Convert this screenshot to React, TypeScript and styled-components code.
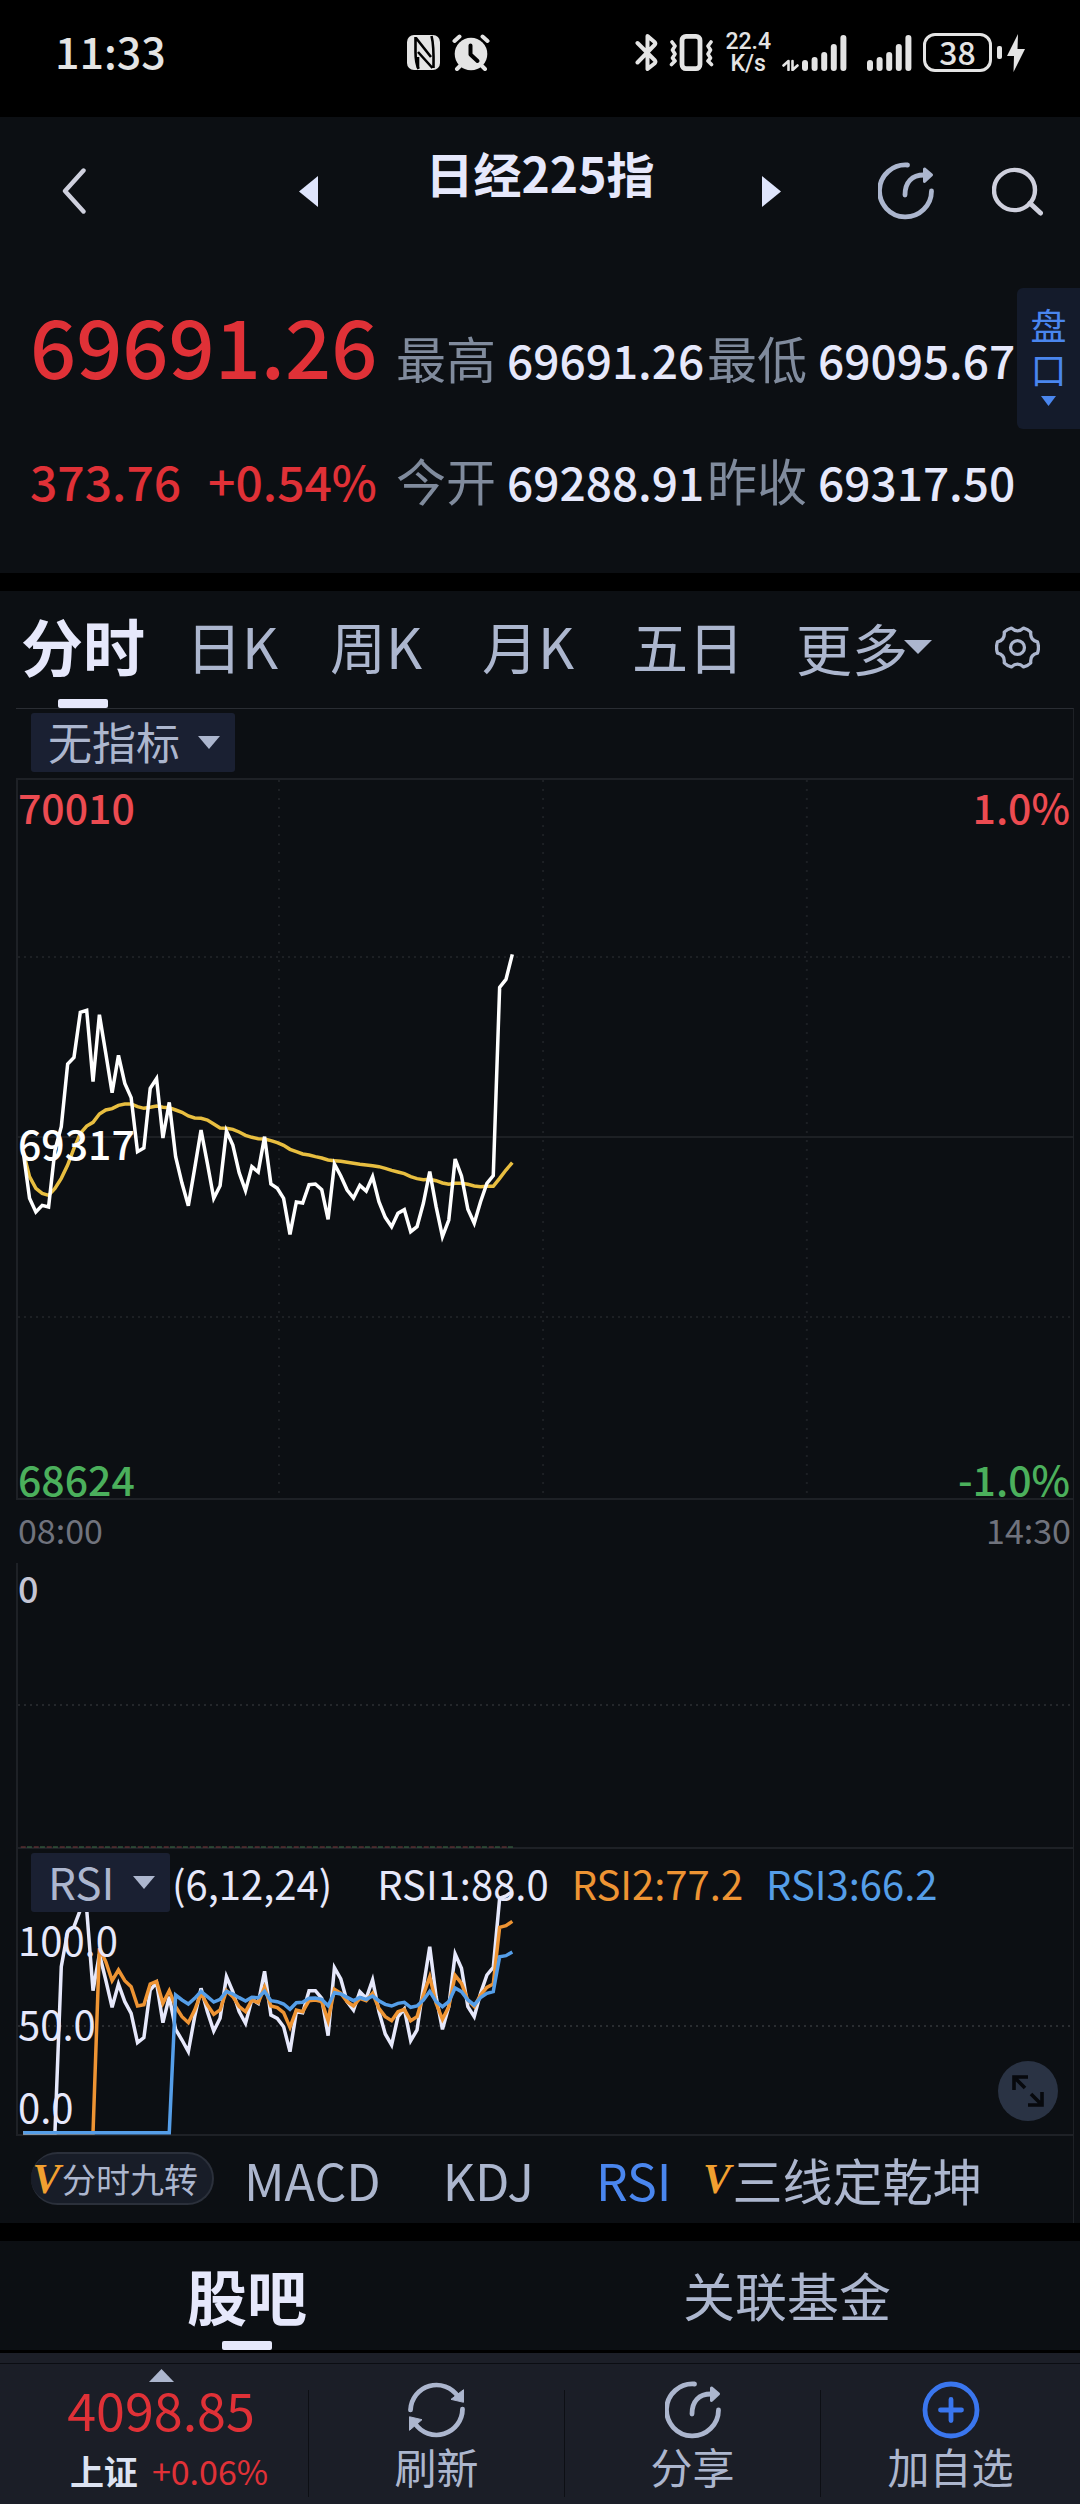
import React from "react";
import styled, { createGlobalStyle, css } from "styled-components";

const CJK = `"Noto Sans CJK SC", "Noto Sans", sans-serif`;

const c = {
  black: "#000000",
  panel: "#0c0f13",
  chip: "#1a2032",
  bar: "#1b1e27",
  line: "#1e2126",
  lineStrong: "#2a2d33",
  text: "#e6e8fb",
  muted: "#acb6ce",
  label: "#808b9d",
  axis: "#70737d",
  red: "#e03137",
  redAxis: "#ec4b51",
  green: "#4bb05c",
  blue: "#4a86ee",
  orange: "#ee9433",
  sky: "#559ee8",
  yellow: "#e8be40",
  status: "#e4e4e4",
};

const GlobalStyle = createGlobalStyle`
  * { box-sizing: border-box; }
  body { margin: 0; background: ${c.black}; font-family: ${CJK}; color: ${c.text}; }
  button, select { font: inherit; color: inherit; background: none; border: 0; padding: 0; margin: 0; cursor: pointer; }
  svg { display: block; flex: none; }
`;

/* ---------- status bar ---------- */

const StatusBar = styled.div`
  display: grid;
  grid-template-columns: 352fr 134fr 484fr;
  align-items: center;
  height: 117px;
  padding: 0 55px 12px;
  color: ${c.status};
`;
const Clock = styled.time`
  padding-bottom: 5px;
  font-size: 43px;
  line-height: 52px;
  font-weight: 500;
`;
const StatusGroup = styled.div<{ $end?: boolean }>`
  display: flex;
  align-items: center;
  gap: ${(p) => (p.$end ? 11 : 12)}px;
  justify-content: ${(p) => (p.$end ? "flex-end" : "flex-start")};
`;
const Speed = styled.div`
  font-family: Roboto, sans-serif;
  font-size: 23px;
  line-height: 22px;
  font-weight: 500;
  text-align: center;
`;
const SignalGroup = styled.div`
  display: flex;
  align-items: flex-end;
  gap: 20px;
`;
const Battery = styled.div`
  display: flex;
  align-items: center;
  gap: 5px;
`;
const BatteryBody = styled.div`
  width: 69px;
  height: 39px;
  border: 3px solid ${c.status};
  border-radius: 12px;
  font-size: 32px;
  line-height: 31px;
  font-weight: 500;
  text-align: center;
`;
const BatteryCap = styled.div`
  width: 5px;
  height: 13px;
  border-radius: 2px;
  background: ${c.status};
`;

const NfcIcon = () => (
  <svg width="33" height="35" viewBox="0 0 33 35" aria-hidden="true">
    <rect width="33" height="35" rx="7" fill={c.status} />
    <path d="M8.500 2V17Q8.500 27 11.500 34M9 3L24 22M25.500 33L11 17M24.500 1Q27 10 26.500 33" stroke="#000" strokeWidth="2.600" fill="none" />
    <path d="M11 22V33" stroke="#000" strokeWidth="2.600" />
  </svg>
);
const AlarmIcon = () => (
  <svg width="38" height="37" viewBox="0 0 38 37" aria-hidden="true">
    <circle cx="19" cy="20" r="16.300" fill={c.status} />
    <path d="M2.500 7L7.500 2.500M35.500 7L30.500 2.500M5 35L9 31M33 35L29 31" stroke={c.status} strokeWidth="4" strokeLinecap="round" />
    <path d="M18.500 11.500V20.500L25.500 27" stroke="#000" strokeWidth="4" strokeLinecap="round" strokeLinejoin="round" fill="none" />
  </svg>
);
const BluetoothIcon = () => (
  <svg width="23" height="37" viewBox="0 0 23 37" aria-hidden="true">
    <path d="M2.500 9L20 26.500Q21 28 19.500 29.500L12.500 35V2L19.500 8Q21 9.500 19.500 11L2.500 28.500" stroke={c.status} strokeWidth="4" strokeLinecap="round" strokeLinejoin="round" fill="none" />
  </svg>
);
const VibrateIcon = () => (
  <svg width="45" height="37" viewBox="0 0 45 37" aria-hidden="true">
    <g stroke={c.status} fill="none" strokeLinecap="round" strokeLinejoin="round">
      <rect x="13" y="2.400" width="18" height="32.200" rx="4" strokeWidth="4.800" />
      <path d="M3 8L6 12L3.500 16L6 20L3.500 24L6 27L2.500 30.500M42 8L39 12L41.500 16L39 20L41.500 24L39 27L42.500 30.500" strokeWidth="3.600" />
    </g>
  </svg>
);
const SignalIcon = ({ data }: { data?: boolean }) => {
  const left = data ? 20 : 0;
  return (
    <svg width={left + 45} height="37" viewBox={`0 0 ${left + 45} 37`} aria-hidden="true">
      {data && (
        <path d="M6.500 36V27L1.500 31.500M10.500 27V36L15.500 31.500" stroke={c.status} strokeWidth="2.600" fill="none" strokeLinejoin="round" strokeLinecap="round" />
      )}
      {[11, 14, 19, 27, 36].map((h, i) => (
        <rect key={h} x={left + i * 9.6} y={37 - h} width="6" height={h} rx="3" fill={c.status} />
      ))}
    </svg>
  );
};
const BoltIcon = () => (
  <svg width="18" height="38" viewBox="0 0 18 38" aria-hidden="true">
    <path d="M11 0L0 22H7L6.500 38L18 15H10.500Z" fill={c.status} />
  </svg>
);

/* ---------- header ---------- */

const Header = styled.header`
  display: grid;
  grid-template-columns: 1fr 48% 1fr;
  align-items: center;
  height: 148px;
  padding: 0 37px;
  background: ${c.panel};
`;
const HeaderNav = styled.div`
  display: flex;
  align-items: center;
  justify-content: space-between;
`;
const Title = styled.h1`
  margin: 0;
  padding-bottom: 38px;
  font-size: 48px;
  line-height: 60px;
  font-weight: 700;
`;
const HeaderActions = styled.div`
  display: flex;
  align-items: center;
  justify-content: flex-end;
  gap: 58px;
`;
const IconButton = styled.button`
  display: block;
`;
const BackButton = styled(IconButton)`
  justify-self: start;
  padding: 0 25px;
`;

const Triangle = ({ dir, w, h, fill }: { dir: "left" | "right" | "up" | "down"; w: number; h: number; fill: string }) => {
  const points = {
    left: `0,${h / 2} ${w},0 ${w},${h}`,
    right: `${w},${h / 2} 0,0 0,${h}`,
    up: `${w / 2},0 ${w},${h} 0,${h}`,
    down: `${w / 2},${h} ${w},0 0,0`,
  }[dir];
  return (
    <svg width={w} height={h} viewBox={`0 0 ${w} ${h}`} aria-hidden="true">
      <polygon points={points} fill={fill} />
    </svg>
  );
};
const ShareIcon = () => (
  <svg width="56" height="58" viewBox="0 0 56 58" aria-hidden="true">
    <path d="M29.500 3A26 26 0 1 0 53.500 29" stroke={c.muted} strokeWidth="4.800" strokeLinecap="round" fill="none" />
    <path d="M27 33C27 20 34 13 46 13" stroke={c.muted} strokeWidth="4.800" strokeLinecap="round" fill="none" />
    <path d="M46.500 7L53.500 13L46.500 19.500Z" fill={c.muted} stroke={c.muted} strokeWidth="3" strokeLinejoin="round" />
  </svg>
);
const SearchIcon = () => (
  <svg width="51" height="49" viewBox="0 0 51 50" preserveAspectRatio="none" aria-hidden="true">
    <circle cx="22.500" cy="23.500" r="20.500" stroke="#cfd0dd" strokeWidth="4.400" fill="none" />
    <path d="M38 37L48.500 47" stroke="#cfd0dd" strokeWidth="5" strokeLinecap="round" />
  </svg>
);
const BackIcon = () => (
  <svg width="24" height="46" viewBox="0 0 24 46" aria-hidden="true">
    <path d="M21.500 2.500L3 23L21.500 43.500" stroke="#cfd0dd" strokeWidth="4.400" strokeLinecap="round" strokeLinejoin="round" fill="none" />
  </svg>
);

/* ---------- quote ---------- */

const Quote = styled.section`
  display: flex;
  align-items: flex-start;
  height: 308px;
  background: ${c.panel};
`;
const QuoteGrid = styled.div`
  flex: 1;
  display: grid;
  grid-template-columns: 366fr 311fr 310fr;
  row-gap: 60px;
  padding: 38px 0 0 30px;
`;
const QuoteCell = styled.div`
  display: flex;
  align-items: baseline;
  align-self: baseline;
  min-width: 0;
  white-space: nowrap;
`;
const Price = styled.strong`
  font-weight: 500;
  font-size: 81px;
  line-height: 82px;
  color: ${c.red};
`;
const Change = styled.span`
  margin-right: 27px;
  font-weight: 500;
  font-size: 48px;
  line-height: 60px;
  color: ${c.red};
  &:last-child { margin-right: 0; }
`;
const StatLabel = styled.span`
  width: 111px;
  font-size: 50px;
  line-height: 60px;
  color: ${c.label};
`;
const StatValue = styled.span`
  font-weight: 500;
  font-size: 46px;
  line-height: 60px;
  color: ${c.text};
`;
const SideTab = styled.button`
  flex: none;
  display: flex;
  flex-direction: column;
  align-items: center;
  gap: 6px;
  width: 63px;
  height: 141px;
  margin-top: 23px;
  padding-top: 14px;
  border-radius: 6px 0 0 6px;
  background: #141b2b;
  color: ${c.blue};
`;
const SideText = styled.span`
  width: 36px;
  font-size: 36px;
  line-height: 44px;
`;

/* ---------- tabs ---------- */

const PeriodTabs = styled.nav`
  display: grid;
  grid-template-columns: 166fr 132fr 156fr 148fr 172fr 180fr 126fr;
  height: 117px;
  margin-top: 18px;
  background: ${c.panel};
`;
const BoardTabs = styled(PeriodTabs)`
  grid-template-columns: 494fr 586fr;
  height: 109px;
`;
const Tab = styled.button<{ $active?: boolean; $size?: number }>`
  display: flex;
  flex-direction: column;
  align-items: center;
  padding-top: 17px;
  font-size: ${(p) => p.$size ?? 56}px;
  line-height: 74px;
  color: ${c.muted};
  white-space: nowrap;
  ${(p) =>
    p.$active &&
    css`
      font-size: ${p.$size ?? 62}px;
      font-weight: 700;
      color: ${c.text};
      &::after {
        content: "";
        width: 50px;
        height: 9px;
        margin-top: auto;
        border-radius: 2px;
        background: ${c.text};
      }
    `}
`;
const TabInner = styled.span`
  display: flex;
  align-items: center;
  height: 78px;
`;
const MoreArrow = styled.span`
  margin-left: -4px;
`;

const GearIcon = () => (
  <svg width="45" height="43" viewBox="0 0 44 42" aria-hidden="true">
    <g stroke={c.muted} strokeWidth="3.200" fill="none" strokeLinejoin="round">
      <path d="M41.500 15.500Q43.500 21 41.500 26.500Q34 28 35 36Q32 39 28 40Q22 34.500 16 40Q12 39 9 36Q10 28 2.500 26.500Q.500 21 2.500 15.500Q10 14 9 6Q12 3 16 2Q22 7.500 28 2Q32 3 35 6Q34 14 41.500 15.500Z" />
      <circle cx="22" cy="21" r="6.800" />
    </g>
  </svg>
);

/* ---------- charts ---------- */

const Charts = styled.section`
  padding: 0 6px 0 16px;
  background: ${c.panel};
`;
const ChartsFrame = styled.div`
  border-top: 1px solid ${c.lineStrong};
  border-right: 1px solid ${c.line};
`;
const ChipRow = styled.div`
  display: flex;
  padding: 4px 15px 6px;
`;
const Chip = styled.label`
  display: grid;
  align-items: center;
  justify-items: end;
  height: 59px;
  border-radius: 3px;
  background: ${c.chip};
  color: ${c.muted};
  svg { grid-area: 1 / 1; margin-right: 15px; pointer-events: none; }
`;
const ChipSelect = styled.select`
  grid-area: 1 / 1;
  appearance: none;
  height: 59px;
  padding: 0 55px 3px 17px;
  font-size: 44px;
  line-height: 56px;
`;
const Plot = styled.div<{ $h: number }>`
  position: relative;
  height: ${(p) => p.$h}px;
  border-left: 2px solid ${c.line};
  border-bottom: 2px solid ${c.line};
`;
const PricePlot = styled(Plot)`
  border-top: 2px solid ${c.line};
`;
const PlotSvg = styled.svg`
  position: absolute;
  inset: 0;
  width: 100%;
  height: 100%;
  overflow: visible;
  * { vector-effect: non-scaling-stroke; }
`;
const Scale = styled.div<{ $right?: boolean }>`
  position: absolute;
  top: 1px;
  bottom: -5px;
  ${(p) => (p.$right ? "right: 3px; align-items: flex-end;" : "left: 0;")}
  display: flex;
  flex-direction: column;
  justify-content: space-between;
  font-weight: 500;
  font-size: 41px;
  line-height: 50px;
`;
const Tick = styled.span<{ $color?: string }>`
  color: ${(p) => p.$color ?? "#ffffff"};
`;
const RsiScale = styled(Scale)`
  top: 70px;
  bottom: 8px;
  font-weight: 400;
  font-size: 40px;
  line-height: 40px;
`;
const TimeAxis = styled.div`
  display: flex;
  justify-content: space-between;
  height: 63px;
  padding: 10px 2px 0;
  font-size: 34px;
  line-height: 40px;
  color: ${c.axis};
`;
const VolumeZero = styled.span`
  position: relative;
  display: block;
  padding: 3px 0;
  font-weight: 500;
  font-size: 36px;
  line-height: 42px;
  color: #c4c5d4;
`;
const RsiHead = styled.div`
  position: relative;
  display: flex;
  align-items: center;
  padding: 4px 0 0 13px;
  font-size: 40px;
  line-height: 58px;
  white-space: nowrap;
`;
const Params = styled.span`
  margin: 0 45px 0 2px;
`;
const Legend = styled.span<{ $color: string }>`
  margin-right: 23px;
  color: ${(p) => p.$color};
`;
const ExpandButton = styled.button`
  position: absolute;
  right: 15px;
  bottom: 13px;
  display: grid;
  place-items: center;
  width: 60px;
  height: 60px;
  border-radius: 50%;
  background: #2a3344;
`;
const IndicatorRow = styled.div`
  display: flex;
  align-items: center;
  gap: 62px;
  height: 87px;
  padding: 0 0 2px 15px;
  font-size: 50px;
  line-height: 66px;
  color: ${c.muted};
  white-space: nowrap;
`;
const PairedGroup = styled.div`
  display: flex;
  align-items: center;
  gap: 30px;
`;
const Pill = styled.button`
  display: flex;
  align-items: center;
  height: 53px;
  padding-right: 14px;
  border: 2px solid #2b303b;
  border-left: 0;
  border-radius: 27px;
  background: #181d28;
  font-size: 34px;
  line-height: 48px;
`;
const Indicator = styled.button<{ $active?: boolean }>`
  display: flex;
  align-items: center;
  color: ${(p) => (p.$active ? c.blue : "inherit")};
`;
const Vip = styled.span`
  width: 31px;
  font: italic 700 42px/48px "Liberation Serif", serif;
  color: #f2a030;
`;

const ExpandIcon = () => (
  <svg width="32" height="32" viewBox="0 0 32 32" aria-hidden="true">
    <path d="M2 15V2H16M2.500 2.500L13 13M30 17V30H16M29.500 29.500L19 19" stroke="#07090d" strokeWidth="3.600" fill="none" />
  </svg>
);

// One reading per slot; positions use the plots' own drawing units.
const SLOT = 18.45;
const FIRST = 67;
const LEFT = 52;
const RIGHT = 3116;
const WIDTH = RIGHT - LEFT;
const toPoints = (ys: number[]) => ys.map((y, i) => `${(FIRST + i * SLOT).toFixed(1)},${y}`).join(" ");

const price = [
  664, 805, 846, 826, 831, 660, 590, 402, 382, 247, 241, 455, 254, 370, 488, 376, 460, 503, 665, 654, 475, 446, 624, 517, 680, 760,
  827, 715, 600, 700, 805, 767, 603, 645, 728, 782, 710, 726, 620, 762, 775, 805, 913, 816, 819, 764, 762, 779, 868, 702, 738, 780,
  804, 766, 783, 740, 815, 862, 890, 850, 839, 905, 890, 820, 725, 830, 920, 870, 687, 738, 838, 880, 815, 760, 737, 172, 148, 73,
];
const average = [
  664, 740, 775, 790, 796, 775, 745, 705, 655, 610, 588, 577, 552, 540, 536, 526, 522, 522, 530, 535, 532, 528, 532, 533, 540, 547,
  558, 564, 565, 570, 582, 594, 595, 598, 606, 616, 622, 626, 627, 632, 638, 646, 658, 665, 672, 675, 680, 684, 690, 692, 694, 697,
  700, 703, 705, 707, 710, 715, 721, 726, 731, 740, 746, 749, 748, 752, 759, 763, 760, 760, 763, 768, 770, 769, 769, 745, 720, 698,
];
const floor = (n: number) => Array.from({ length: n }, () => 908);
const rsi1 = [
  ...floor(6), 410, 305, 290, 240, 238, 482, 372, 450, 532, 462, 515, 550, 638, 623, 480, 458, 578, 500, 598, 630, 665, 560, 475,
  545, 603, 565, 440, 485, 545, 580, 508, 520, 424, 555, 565, 590, 665, 545, 548, 482, 482, 505, 617, 413, 447, 515, 540, 485, 505,
  450, 545, 612, 645, 560, 537, 632, 600, 470, 350, 500, 598, 530, 372, 415, 530, 560, 490, 435, 412, 205, 198, 185,
];
const rsi2 = [
  ...floor(12), 355, 395, 452, 420, 452, 470, 528, 524, 462, 454, 520, 482, 530, 560, 578, 540, 490, 525, 553, 540, 482, 500, 530,
  545, 510, 518, 472, 528, 533, 548, 592, 540, 545, 512, 510, 515, 572, 478, 490, 515, 528, 505, 512, 490, 535, 560, 572, 545, 538,
  572, 560, 495, 440, 520, 568, 530, 436, 460, 510, 530, 495, 472, 462, 292, 287, 274,
];
const rsi3 = [
  ...floor(24), 495, 510, 522, 505, 484, 500, 516, 508, 484, 492, 503, 513, 502, 503, 484, 512, 515, 522, 538, 518, 517, 505, 504,
  508, 527, 488, 492, 502, 512, 502, 508, 498, 512, 523, 528, 520, 517, 532, 528, 510, 484, 515, 530, 515, 474, 485, 510, 525, 503,
  490, 485, 380, 377, 366,
];

const Series = ({ ys, color }: { ys: number[]; color: string }) => (
  <polyline points={toPoints(ys)} fill="none" stroke={color} strokeWidth="3.500" strokeLinejoin="miter" />
);

/* ---------- bottom bar ---------- */

const BottomBar = styled.footer`
  display: grid;
  grid-template-columns: 308fr 256fr 256fr 260fr;
  height: 151px;
  margin-top: 3px;
  padding-top: 10px;
  background: ${c.bar};
  box-shadow: inset 0 10px 0 #1c1f28, inset 0 11px 0 #0b0d12;
`;
const BottomItem = styled.button`
  display: flex;
  flex-direction: column;
  align-items: center;
  padding-top: 18px;
  font-size: 42px;
  line-height: 54px;
  color: ${c.muted};
  & + & {
    border-left: 1px solid #0d0f14;
    border-image: linear-gradient(transparent 28px, #0d0f14 28px, #0d0f14 133px, transparent 133px) 1;
  }
`;
const IndexItem = styled(BottomItem)`
  padding: 6px 0 0 14px;
`;
const IndexValue = styled.span`
  font-size: 52px;
  line-height: 54px;
  color: ${c.red};
`;
const IndexRow = styled.span`
  display: flex;
  align-items: baseline;
  gap: 14px;
  padding: 11px 0 0 16px;
  font-size: 34px;
  line-height: 48px;
  color: ${c.red};
`;
const IndexName = styled.span`
  font-weight: 700;
  color: #dde3f2;
`;

const RefreshIcon = () => (
  <svg width="57" height="58" viewBox="0 0 57 60" preserveAspectRatio="none" aria-hidden="true">
    <g fill={c.muted} stroke={c.muted}>
      <path d="M2.500 30A26 27 0 0 1 50 16M54.500 29A26 27 0 0 1 7 44" strokeWidth="4.800" strokeLinecap="round" fill="none" />
      <path d="M55.500 9V22L43 19ZM1.500 37V51L14 40Z" strokeWidth="1" strokeLinejoin="round" />
    </g>
  </svg>
);
const AddIcon = () => (
  <svg width="58" height="58" viewBox="0 0 58 58" aria-hidden="true">
    <g stroke="#3a76ee" strokeWidth="4.800" strokeLinecap="round" fill="none">
      <circle cx="29" cy="29" r="26" />
      <path d="M18.500 29H39.500M29 18.500V39.500" />
    </g>
  </svg>
);

export default function App() {
  return (
    <>
      <GlobalStyle />
      <StatusBar>
        <Clock>11:33</Clock>
        <StatusGroup>
          <NfcIcon />
          <AlarmIcon />
        </StatusGroup>
        <StatusGroup $end>
          <BluetoothIcon />
          <VibrateIcon />
          <Speed>
            22.4
            <br />
            K/s
          </Speed>
          <SignalGroup>
            <SignalIcon data />
            <SignalIcon />
          </SignalGroup>
          <Battery>
            <BatteryBody>38</BatteryBody>
            <BatteryCap />
            <BoltIcon />
          </Battery>
        </StatusGroup>
      </StatusBar>

      <Header>
        <BackButton aria-label="返回">
          <BackIcon />
        </BackButton>
        <HeaderNav>
          <IconButton aria-label="上一个">
            <Triangle dir="left" w={19} h={31} fill="#dfe5fc" />
          </IconButton>
          <Title>日经225指</Title>
          <IconButton aria-label="下一个">
            <Triangle dir="right" w={19} h={31} fill="#dfe5fc" />
          </IconButton>
        </HeaderNav>
        <HeaderActions>
          <IconButton aria-label="分享">
            <ShareIcon />
          </IconButton>
          <IconButton aria-label="搜索">
            <SearchIcon />
          </IconButton>
        </HeaderActions>
      </Header>

      <Quote>
        <QuoteGrid>
          <QuoteCell>
            <Price>69691.26</Price>
          </QuoteCell>
          <QuoteCell>
            <StatLabel>最高</StatLabel>
            <StatValue>69691.26</StatValue>
          </QuoteCell>
          <QuoteCell>
            <StatLabel>最低</StatLabel>
            <StatValue>69095.67</StatValue>
          </QuoteCell>
          <QuoteCell>
            <Change>373.76</Change>
            <Change>+0.54%</Change>
          </QuoteCell>
          <QuoteCell>
            <StatLabel>今开</StatLabel>
            <StatValue>69288.91</StatValue>
          </QuoteCell>
          <QuoteCell>
            <StatLabel>昨收</StatLabel>
            <StatValue>69317.50</StatValue>
          </QuoteCell>
        </QuoteGrid>
        <SideTab>
          <SideText>盘口</SideText>
          <Triangle dir="down" w={15} h={10} fill={c.blue} />
        </SideTab>
      </Quote>

      <PeriodTabs>
        <Tab $active>分时</Tab>
        <Tab>日K</Tab>
        <Tab>周K</Tab>
        <Tab>月K</Tab>
        <Tab>五日</Tab>
        <Tab aria-haspopup="menu">
          <TabInner>
            更多
            <MoreArrow>
              <Triangle dir="down" w={28} h={14} fill={c.muted} />
            </MoreArrow>
          </TabInner>
        </Tab>
        <Tab aria-label="设置">
          <TabInner>
            <GearIcon />
          </TabInner>
        </Tab>
      </PeriodTabs>

      <Charts>
        <ChartsFrame>
          <ChipRow>
            <Chip>
              <ChipSelect aria-label="主图指标">
                <option>无指标</option>
              </ChipSelect>
              <Triangle dir="down" w={22} h={13} fill={c.muted} />
            </Chip>
          </ChipRow>

          <PricePlot $h={722}>
            <PlotSvg viewBox={`${LEFT} -450 ${WIDTH} 2154`} preserveAspectRatio="none" aria-hidden="true">
              <g stroke="#1d2024" strokeWidth="2">
                <path d={`M${LEFT} 621H${RIGHT}`} />
                <path d={`M${LEFT} 81H${RIGHT}M${LEFT} 1161H${RIGHT}`} strokeDasharray="2 4" />
                <path d="M810 -450V1704M1577 -450V1704M2343 -450V1704" strokeDasharray="2 7" />
              </g>
              <Series ys={average} color={c.yellow} />
              <Series ys={price} color="#ffffff" />
            </PlotSvg>
            <Scale>
              <Tick $color={c.redAxis}>70010</Tick>
              <Tick>69317</Tick>
              <Tick $color={c.green}>68624</Tick>
            </Scale>
            <Scale $right>
              <Tick $color={c.redAxis}>1.0%</Tick>
              <Tick $color={c.green}>-1.0%</Tick>
            </Scale>
          </PricePlot>

          <TimeAxis>
            <span>08:00</span>
            <span>14:30</span>
          </TimeAxis>

          <Plot $h={286}>
            <PlotSvg viewBox={`${LEFT} 0 ${WIDTH} 284`} preserveAspectRatio="none" aria-hidden="true">
              <path d={`M${LEFT} 142H${RIGHT}`} stroke="#24272b" strokeWidth="2" strokeDasharray="2 4" />
              <path d="M60 284H1490" stroke="#7a3a3c" strokeWidth="1" strokeDasharray="5 8" />
              <path d="M78 284H1490" stroke="#3f7048" strokeWidth="1" strokeDasharray="5 8" />
            </PlotSvg>
            <VolumeZero>0</VolumeZero>
          </Plot>

          <Plot $h={287}>
            <PlotSvg viewBox={`${LEFT} 57 ${WIDTH} 855`} preserveAspectRatio="none" aria-hidden="true">
              <path d={`M${LEFT} 588H${RIGHT}`} stroke="#2a2d31" strokeWidth="2" strokeDasharray="2 4" />
              <Series ys={rsi1} color={c.text} />
              <Series ys={rsi2} color={c.orange} />
              <Series ys={rsi3} color={c.sky} />
            </PlotSvg>
            <RsiHead>
              <Chip>
                <ChipSelect aria-label="副图指标">
                  <option>RSI</option>
                </ChipSelect>
                <Triangle dir="down" w={22} h={13} fill={c.muted} />
              </Chip>
              <Params>(6,12,24)</Params>
              <Legend $color={c.text}>RSI1:88.0</Legend>
              <Legend $color={c.orange}>RSI2:77.2</Legend>
              <Legend $color={c.sky}>RSI3:66.2</Legend>
            </RsiHead>
            <RsiScale>
              <Tick $color={c.text}>100.0</Tick>
              <Tick $color={c.text}>50.0</Tick>
              <Tick $color={c.text}>0.0</Tick>
            </RsiScale>
            <ExpandButton aria-label="全屏">
              <ExpandIcon />
            </ExpandButton>
          </Plot>

          <IndicatorRow>
            <PairedGroup>
              <Pill>
                <Vip>V</Vip>
                分时九转
              </Pill>
              <Indicator>MACD</Indicator>
            </PairedGroup>
            <Indicator>KDJ</Indicator>
            <PairedGroup>
              <Indicator $active>RSI</Indicator>
              <Indicator>
                <Vip>V</Vip>
                三线定乾坤
              </Indicator>
            </PairedGroup>
          </IndicatorRow>
        </ChartsFrame>
      </Charts>

      <BoardTabs>
        <Tab $active $size={60}>
          股吧
        </Tab>
        <Tab $size={52}>关联基金</Tab>
      </BoardTabs>

      <BottomBar>
        <IndexItem>
          <Triangle dir="up" w={25} h={13} fill={c.muted} />
          <IndexValue>4098.85</IndexValue>
          <IndexRow>
            <IndexName>上证</IndexName>
            +0.06%
          </IndexRow>
        </IndexItem>
        <BottomItem>
          <RefreshIcon />
          刷新
        </BottomItem>
        <BottomItem>
          <ShareIcon />
          分享
        </BottomItem>
        <BottomItem>
          <AddIcon />
          加自选
        </BottomItem>
      </BottomBar>
    </>
  );
}
